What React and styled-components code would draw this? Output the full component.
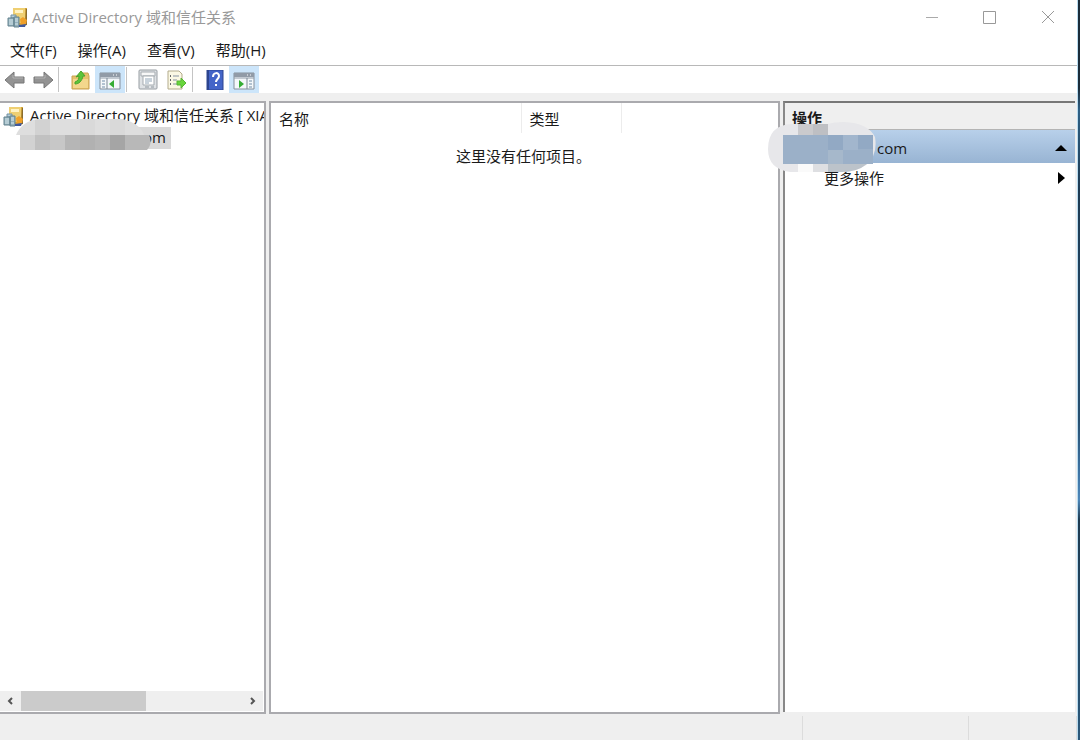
import React from "react";
import styled, { createGlobalStyle, css } from "styled-components";

const GlobalStyle = createGlobalStyle`
  * { box-sizing: border-box; }
  body {
    margin: 0;
    background: #efefef;
    color: #1a1a1a;
    font-family: "Open Sans", "Noto Sans CJK SC", sans-serif;
    font-size: 15px;
    line-height: 20px;
  }
  button {
    font: inherit;
    color: inherit;
    background: none;
    border: 0;
    padding: 0;
    display: flex;
    align-items: center;
  }
  svg { flex-shrink: 0; }
`;

const Desktop = styled.div`
  min-height: 100vh;
  display: flex;
  background: linear-gradient(#1b2c3a 0, #1b2c3a 88px, #2f6085 110px, #1d3a52 190px, #274f70 420px, #3f75a6 475px, #4d86b8 500px, #1d3a50 520px, #2b587a 100%);
  padding-right: 2px;
`;

const Window = styled.div`
  flex: 1;
  min-width: 0;
  display: flex;
  flex-direction: column;
  background: #efefef;
  border-right: 1px solid #b9dcf0;
`;

const TitleBar = styled.header`
  display: flex;
  align-items: center;
  height: 34px;
  padding-left: 7px;
  background: #fff;
`;

const Title = styled.h1`
  flex: 1;
  margin: 0 0 0 4px;
  font-size: 15px;
  line-height: 18px;
  font-weight: 400;
  color: #999;
`;

const CaptionButton = styled.button`
  width: 58px;
  height: 34px;
  justify-content: center;
`;

const MenuBar = styled.nav`
  display: flex;
  gap: 21px;
  height: 31px;
  padding-left: 10px;
  background: #fff;
`;

const ToolBar = styled.div`
  display: flex;
  align-items: center;
  height: 28px;
  border-top: 1px solid #b8b8b8;
  background: #fff;
`;

const ToolButton = styled.button`
  width: 29px;
  height: 27px;
  justify-content: center;
  ${(p) => p.$active && css`width: 30px; background: #cce5fa;`}
`;

const Divider = styled.span`
  width: 1px;
  height: 25px;
  margin: 0 ${(p) => p.$after}px 0 ${(p) => p.$before}px;
  background: #c4c4c4;
`;

const Workspace = styled.main`
  flex: 1;
  display: grid;
  grid-template-columns: 266px 1fr 292px;
  gap: 3px;
  padding-top: 8px;
  padding-right: 2px;
`;

const Pane = styled.section`
  display: flex;
  flex-direction: column;
  min-width: 0;
  background: #fff;
  border: 2px solid #aaaaae;
  ${(p) => p.$flushLeft && css`border-left: 0;`}
`;

const Tree = styled.ul`
  flex: 1;
  list-style: none;
  margin: 0;
  padding: 2px 0 0;
  position: relative;
`;

const TreeRow = styled.li`
  display: flex;
  align-items: center;
  gap: 6px;
  height: 22px;
  padding-left: ${(p) => p.$indent}px;
  white-space: nowrap;
  overflow: hidden;
`;

const TreeLabel = styled.span`
  line-height: 18px;
  padding-bottom: 2px;
`;

const Selected = styled.span`
  width: 135px;
  height: 22px;
  padding-right: 5px;
  text-align: right;
  background: #d9d9d9;
`;

const TreeMask = styled.svg`
  position: absolute;
  left: 16px;
  top: 16px;
`;

const ScrollBar = styled.div`
  display: flex;
  align-items: center;
  height: 20px;
  margin: 0 1px 1px 0;
  background: #efefef;
`;

const ScrollArrow = styled.button`
  width: 21px;
  height: 20px;
  justify-content: center;
`;

const ScrollTrack = styled.div`
  flex: 1;
  height: 20px;
`;

const ScrollThumb = styled.div`
  width: 125px;
  height: 20px;
  background: #cbcbcb;
`;

const ListTable = styled.table`
  width: 100%;
  table-layout: fixed;
  border-collapse: collapse;
`;

const HeadCell = styled.th`
  width: ${(p) => p.$width};
  height: 30px;
  padding: 2px 8px 0;
  text-align: left;
  font-weight: 400;
  border-right: ${(p) => (p.$last ? "0" : "1px solid #ececec")};
`;

const EmptyCell = styled.td`
  height: 46px;
  padding: 0 2px 0 0;
  text-align: center;
`;

const ActionPane = styled.aside`
  position: relative;
  display: flex;
  flex-direction: column;
  margin-bottom: 2px;
  background: #fff;
  border-left: 2px solid #888;
  border-top: 2px solid #777;
`;

const ActionHeading = styled.h2`
  height: 27px;
  margin: 0;
  padding: 5px 7px 0;
  font-size: 15px;
  line-height: 20px;
  font-weight: 700;
  background: #efefef;
  border-bottom: 1px solid #b4b4b4;
`;

const ActionGroup = styled.button`
  justify-content: space-between;
  height: 33px;
  padding: 2px 8px 0 92px;
  background: linear-gradient(#b8d0ea, #98b4d3);
`;

const ActionItem = styled.button`
  justify-content: space-between;
  height: 30px;
  padding: 0 10px 0 39px;
`;

const ActionMask = styled.svg`
  position: absolute;
  left: -17px;
  top: 18px;
`;

const StatusBar = styled.footer`
  display: grid;
  grid-template-columns: 1fr 166px 108px;
  height: 26px;
  padding-top: 2px;
`;

const StatusCell = styled.div`
  border-right: 1px solid #dcdcdc;
`;

const DomainIcon = () => (
  <svg width="21" height="21" viewBox="0 0 21 21" aria-hidden="true">
    <path d="M6 1h14v17l-3 1H6z" fill="#d3a63c" />
    <path d="M6 1h12v15H6z" fill="#efcf72" />
    <path d="M8 3h8v3H8z" fill="#fff3c4" />
    <path d="M19 2h1v16h-2z" fill="#8a6c2e" />
    <path d="M4 8h5v3H4z" fill="#b4ccd8" stroke="#7391a2" />
    <path d="M1 11h6v8H1zM7 10h5v10H7z" fill="#94b0bc" stroke="#64838f" />
    <path d="M2 13h4M2 15h4M2 17h4M8 12h3M8 14h3M8 17h3" stroke="#d8e9ed" />
    <path d="M13 12l3-2 4 3-1 4-5 1z" fill="#f0a028" />
    <path d="M12 18l7-1-1 3h-6z" fill="#41599c" />
  </svg>
);

const ArrowIcon = ({ right }) => (
  <svg width="22" height="20" viewBox="0 0 22 20" aria-hidden="true">
    <path
      d={right ? "M1 7h10V2l9 8-9 8v-5H1z" : "M20 7H10V2l-9 8 9 8v-5h10z"}
      fill="#939393" stroke="#777" strokeLinejoin="round"
    />
    <path d={right ? "M2 8h10V5" : "M19 8H9V5"} fill="none" stroke="#b4b4b4" />
  </svg>
);

const FolderIcon = () => (
  <svg width="20" height="20" viewBox="0 0 20 20" aria-hidden="true">
    <path d="M1 6h8l2-3h6l1 3v13H1z" fill="#e6c16c" stroke="#caa252" />
    <path d="M2 9h15v9H2z" fill="#f3d78c" />
    <path d="M4 12c3-1 4-3 4-6L5 7l5-6 4 5h-2c-1 5-4 8-8 8z" fill="#5cc43a" stroke="#48a52d" />
  </svg>
);

const PanelIcon = ({ right }) => (
  <svg width="22" height="20" viewBox="0 0 22 20" aria-hidden="true">
    <path d="M1 3h20v16H1z" fill="#f4f8fb" stroke="#85909c" />
    <path d="M1 3h20v4H1z" fill="#919ba7" />
    <path d="M14 5h1M17 5h1" stroke="#fff" />
    <path d="M1 8h20" stroke="#919ba7" />
    {right ? (
      <>
        <path d="M14 8v11" stroke="#7d8995" />
        <path d="M16 11h3M16 14h3M16 17h3" stroke="#718da8" />
        <path d="M6 10l5 4-5 4z" fill="#35ad35" />
      </>
    ) : (
      <>
        <path d="M8 8v11" stroke="#7d8995" />
        <path d="M3 11h3M3 14h3M3 17h3" stroke="#718da8" />
        <path d="M15 10l-5 4 5 4z" fill="#35ad35" />
      </>
    )}
  </svg>
);

const PropertiesIcon = () => (
  <svg width="20" height="21" viewBox="0 0 20 21" aria-hidden="true">
    <rect x="1" y="1" width="18" height="19" rx="1" fill="#dfe2e5" stroke="#979da2" />
    <path d="M3 3h14v4H3z" fill="#f8f8f8" stroke="#a5abb0" />
    <path d="M5 7h11v9H5z" fill="#fff" stroke="#a5abb0" />
    <path d="M7 10h7M7 12h7M7 14h4" stroke="#92a6b8" />
    <path d="M7 18h4M13 18h3" stroke="#8d969e" />
  </svg>
);

const ExportIcon = () => (
  <svg width="21" height="20" viewBox="0 0 21 20" aria-hidden="true">
    <path d="M2 1h11l3 3v15H2z" fill="#fbf8e4" stroke="#b3ab8c" />
    <path d="M4 6h1M4 10h1M4 14h1" stroke="#666" strokeWidth="2" />
    <path d="M7 6h6M7 10h4M7 14h4" stroke="#8793a3" />
    <path d="M11 11h4V8l5 5-5 5v-3h-4z" fill="#69d53c" stroke="#56b534" />
  </svg>
);

const HelpIcon = () => (
  <svg width="18" height="20" viewBox="0 0 18 20" aria-hidden="true">
    <path d="M1 0h16v20H1z" fill="#4465c8" stroke="#2c448f" />
    <path d="M2 0v20" stroke="#2c448f" strokeWidth="2" />
    <path d="M7 7c0-5 6-5 6-1 0 3-3 3-3 6" fill="none" stroke="#fff" strokeWidth="2" />
    <path d="M9 14h2v2H9z" fill="#fff" />
  </svg>
);

const Chevron = ({ right }) => (
  <svg width="8" height="10" viewBox="0 0 8 10" aria-hidden="true">
    <path d={right ? "M2 2l3 3-3 3" : "M5 2L2 5l3 3"} fill="none" stroke="#555" strokeWidth="2" />
  </svg>
);

const menus = ["文件(F)", "操作(A)", "查看(V)", "帮助(H)"];

export default function App() {
  return (
    <Desktop>
      <GlobalStyle />
      <Window>
        <TitleBar>
          <DomainIcon />
          <Title>Active Directory 域和信任关系</Title>
          <CaptionButton aria-label="最小化">
            <svg width="14" height="14"><path d="M1 7.500h12" stroke="#aaa" /></svg>
          </CaptionButton>
          <CaptionButton aria-label="最大化">
            <svg width="14" height="14"><path d="M.5 1.500h12v12H.5z" fill="none" stroke="#999" /></svg>
          </CaptionButton>
          <CaptionButton aria-label="关闭">
            <svg width="14" height="14"><path d="M1 1l12 12M13 1L1 13" stroke="#999" /></svg>
          </CaptionButton>
        </TitleBar>
        <MenuBar>
          {menus.map((m) => <button key={m}>{m}</button>)}
        </MenuBar>
        <ToolBar>
          <ToolButton aria-label="后退"><ArrowIcon /></ToolButton>
          <ToolButton aria-label="前进"><ArrowIcon right /></ToolButton>
          <Divider $before={0} $after={7} />
          <ToolButton aria-label="上一级"><FolderIcon /></ToolButton>
          <ToolButton aria-label="显示控制台树" $active><PanelIcon /></ToolButton>
          <Divider $before={1} $after={6} />
          <ToolButton aria-label="属性"><PropertiesIcon /></ToolButton>
          <ToolButton aria-label="导出列表"><ExportIcon /></ToolButton>
          <Divider $before={1} $after={7} />
          <ToolButton aria-label="帮助"><HelpIcon /></ToolButton>
          <ToolButton aria-label="显示操作窗格" $active><PanelIcon right /></ToolButton>
        </ToolBar>
        <Workspace>
          <Pane $flushLeft>
            <Tree>
              <TreeRow $indent={3}>
                <DomainIcon />
                <TreeLabel>Active Directory 域和信任关系 [ XIA</TreeLabel>
              </TreeRow>
              <TreeRow $indent={36}><Selected>com</Selected></TreeRow>
              <TreeMask width="136" height="31" aria-hidden="true">
                <path d="M0 16Q6 2 22 0H106Q124 4 128 16z" fill="#dedede" />
                <path d="M19 1L34 0V16H19z" fill="#d2d2d2" />
                <path d="M64 0h15v16H64zM94 0h12l3 1v15H94z" fill="#d9d9d9" />
                <path d="M4 16h15v15H4z" fill="#d2d2d2" />
                <path d="M19 16h15v15H19z" fill="#c1c1c1" />
                <path d="M34 16h15v15H34z" fill="#c7c7c7" />
                <path d="M49 16h45v15H49z" fill="#b6b6b6" />
                <path d="M64 16h15v15H64z" fill="#b1b1b1" />
                <path d="M94 16h15v15H94z" fill="#a5a5a5" />
                <path d="M109 16h24q4 8-2 15h-22z" fill="#b8b8b8" />
              </TreeMask>
            </Tree>
            <ScrollBar>
              <ScrollArrow aria-label="向左滚动"><Chevron /></ScrollArrow>
              <ScrollTrack><ScrollThumb /></ScrollTrack>
              <ScrollArrow aria-label="向右滚动"><Chevron right /></ScrollArrow>
            </ScrollBar>
          </Pane>
          <Pane>
            <ListTable>
              <thead>
                <tr>
                  <HeadCell $width="250px">名称</HeadCell>
                  <HeadCell $width="100px">类型</HeadCell>
                  <HeadCell $last aria-label="空列" />
                </tr>
              </thead>
              <tbody>
                <tr><EmptyCell colSpan={3}>这里没有任何项目。</EmptyCell></tr>
              </tbody>
            </ListTable>
          </Pane>
          <ActionPane>
            <ActionHeading>操作</ActionHeading>
            <ActionGroup>
              <span>com</span>
              <svg width="12" height="8" aria-hidden="true"><path d="M0 7L6 1l6 6z" fill="#000" /></svg>
            </ActionGroup>
            <ActionItem>
              <span>更多操作</span>
              <svg width="7" height="12" aria-hidden="true"><path d="M0 0l7 6-7 6z" fill="#000" /></svg>
            </ActionItem>
            <ActionMask width="108" height="52" aria-hidden="true">
              <path d="M0 28Q0 4 24 3H60Q66 1 76 1Q100 2 107 16Q110 34 98 44Q88 51 74 51H22Q0 48 0 28z" fill="#e7e7ea" />
              <path d="M30 3h30v11H30z" fill="#cacacd" />
              <path d="M45 3h15v11H45z" fill="#bebfc3" />
              <path d="M15 14h90v29H15z" fill="#9bb0c8" />
              <path d="M60 14h15v15H60zM90 14h15v14H90z" fill="#92a9c4" />
              <path d="M75 14h15v15H75z" fill="#a2b6cd" />
              <path d="M60 29h15v14H60z" fill="#a6b8cb" />
              <path d="M60 43h39q-10 8-25 8H60z" fill="#bcc3ca" />
              <path d="M30 43h15v8H30z" fill="#fafafa" />
              <path d="M45 43h15v8H45z" fill="#dedfe2" />
            </ActionMask>
          </ActionPane>
        </Workspace>
        <StatusBar>
          <StatusCell />
          <StatusCell />
          <StatusCell />
        </StatusBar>
      </Window>
    </Desktop>
  );
}
